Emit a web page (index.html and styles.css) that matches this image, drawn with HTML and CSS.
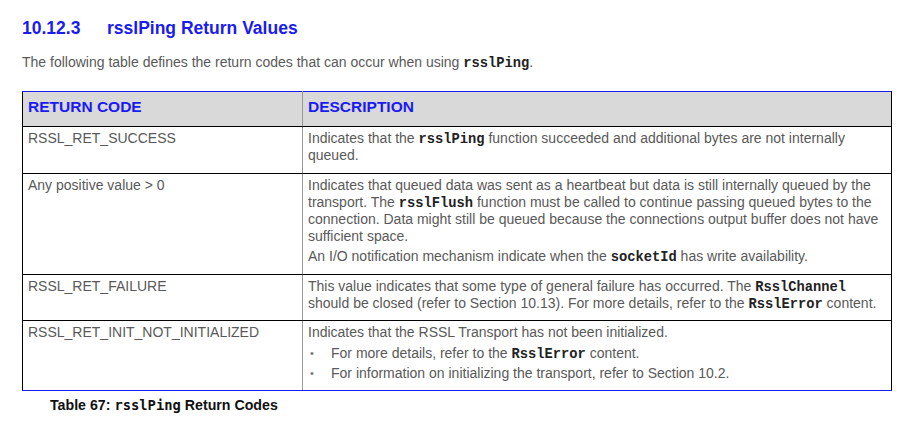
FILE: index.html
```html
<!DOCTYPE html>
<html>
<head>
<meta charset="utf-8">
<link rel="stylesheet" href="styles.css">
</head>
<body>
<div class="page">
  <h3 class="title"><span class="num">10.12.3</span><span>rsslPing Return Values</span></h3>
  <p class="intro">The following table defines the return codes that can occur when using <code>rsslPing</code>.</p>
  <table class="rt">
    <thead>
      <tr><th class="c1">RETURN CODE</th><th class="c2">DESCRIPTION</th></tr>
    </thead>
    <tbody>
      <tr class="r1">
        <td class="c1">RSSL_RET_SUCCESS</td>
        <td class="c2">Indicates that the <code>rsslPing</code> function succeeded and additional bytes are not internally queued.</td>
      </tr>
      <tr class="r2">
        <td class="c1">Any positive value &gt; 0</td>
        <td class="c2"><p>Indicates that queued data was sent as a heartbeat but data is still internally queued by the transport. The <code>rsslFlush</code> function must be called to continue passing queued bytes to the connection. Data might still be queued because the connections output buffer does not have sufficient space.</p><p class="p2">An I/O notification mechanism indicate when the <code>socketId</code> has write availability.</p></td>
      </tr>
      <tr class="r3">
        <td class="c1">RSSL_RET_FAILURE</td>
        <td class="c2">This value indicates that some type of general failure has occurred. The <code>RsslChannel</code> should be closed (refer to Section 10.13). For more details, refer to the <code>RsslError</code> content.</td>
      </tr>
      <tr class="r4">
        <td class="c1">RSSL_RET_INIT_NOT_INITIALIZED</td>
        <td class="c2"><p>Indicates that the RSSL Transport has not been initialized.</p>
          <ul>
            <li>For more details, refer to the <code>RsslError</code> content.</li>
            <li>For information on initializing the transport, refer to Section 10.2.</li>
          </ul>
        </td>
      </tr>
    </tbody>
  </table>
  <p class="caption">Table 67: <span class="mono">rsslPing</span> Return Codes</p>
</div>
</body>
</html>
```

FILE: styles.css
```css
html, body { margin: 0; padding: 0; background: #fff; }
body { font-family: "Liberation Sans", Arial, sans-serif; color: #595959; }
.page { padding: 16px 0 0 22px; width: 870px; }
.title { margin: 0; font-size: 17.5px; font-weight: bold; color: #1a1af5; line-height: 24px; display: flex; }
.title .num { width: 85px; }
.intro { margin: 13px 0 0 0; font-size: 14px; line-height: 18px; color: #595959; }
code { font-family: "Liberation Mono", "Courier New", monospace; font-weight: bold; color: #222; font-size: 13.75px; line-height: 1; }
.rt { margin-top: 20px; width: 870px; border-collapse: collapse; font-size: 14px; table-layout: fixed; }
.rt th, .rt td { text-align: left; vertical-align: top; padding: 3px 5px 8px 5px; }
.rt th { background: #d9d9d9; color: #1a1af5; font-size: 15.5px; font-weight: bold; height: 35px; padding: 0 5px 4px 5px; vertical-align: middle; box-sizing: border-box; border-top: 1px solid #1a1af5; border-bottom: 1.5px solid #000; }
.rt .c1 { width: 280px; border-left: 1px solid #000; border-right: 1px solid #999; box-sizing: border-box; }
.rt .c2 { border-right: 1.5px solid #000; }
.rt td { line-height: 17.3px; border-bottom: 1.5px solid #000; color: #595959; }
.rt tr.r4 td { border-bottom: 1px solid #1a1af5; padding-bottom: 7px; }
.rt td p { margin: 0; }
.rt td p.p2 { margin-top: 2.7px; }
.rt ul { margin: 1px 0 0 0; padding: 0; list-style: none; }
.rt li { position: relative; padding-left: 23px; line-height: 20px; height: 20px; }
.rt li::before { content: "•"; position: absolute; left: 2px; top: 0; font-size: 11px; color: #777; }
.caption { margin: 6px 0 0 28px; font-size: 14.2px; font-weight: bold; color: #111; }
.mono { font-family: "DejaVu Sans Mono", monospace; font-weight: bold; font-size: 13.8px; }
```
